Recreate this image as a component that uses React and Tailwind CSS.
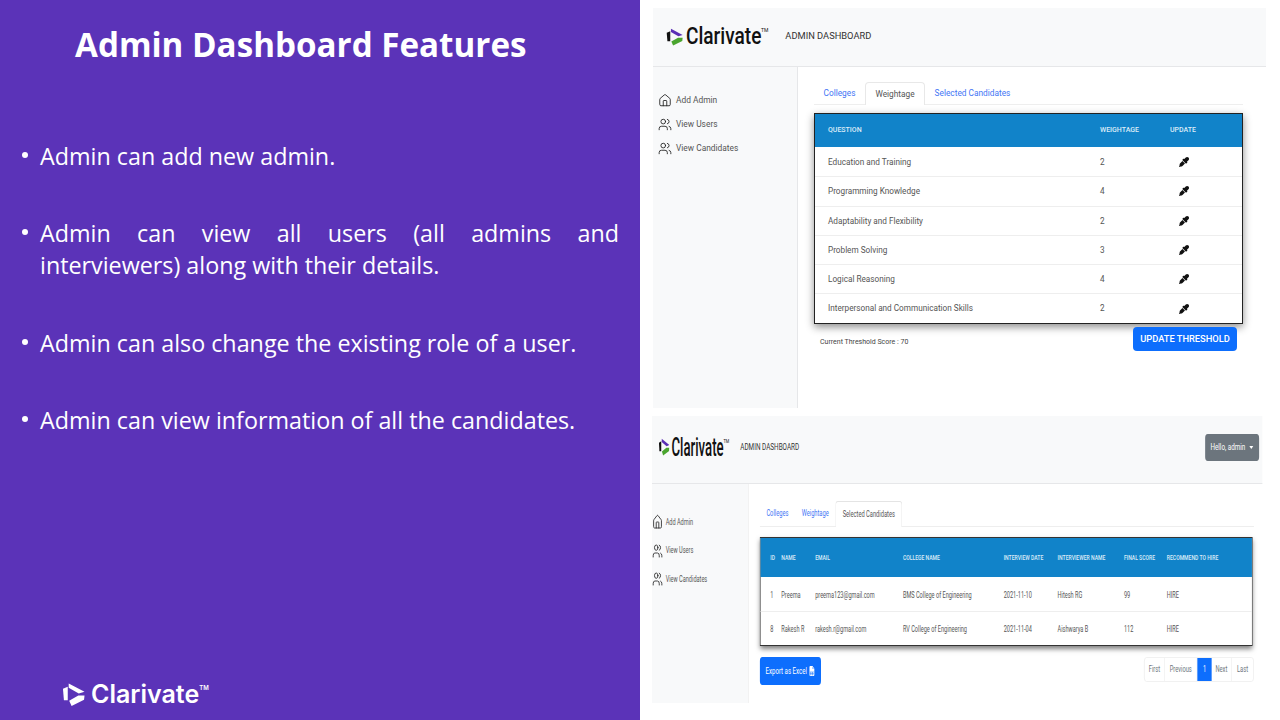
import React from "react";
import { House, Users } from "lucide-react";
import { BsFileEarmarkSpreadsheetFill } from "react-icons/bs";
import { FaEyeDropper } from "react-icons/fa";

const BULLETS = [
  "Admin can add new admin.",
  "Admin can view all users (all admins and interviewers) along with their details.",
  "Admin can also change the existing role of a user.",
  "Admin can view information of all the candidates.",
];

const WEIGHTS = [
  ["Education and Training", 2],
  ["Programming Knowledge", 4],
  ["Adaptability and Flexibility", 2],
  ["Problem Solving", 3],
  ["Logical Reasoning", 4],
  ["Interpersonal and Communication Skills", 2],
];

const CANDIDATES = [
  ["1", "Preema", "preema123@gmail.com", "BMS College of Engineering", "2021-11-10", "Hitesh RG", "99", "HIRE"],
  ["8", "Rakesh R", "rakesh.r@gmail.com", "RV College of Engineering", "2021-11-04", "Aishwarya B", "112", "HIRE"],
];

const HEADERS = ["ID", "NAME", "EMAIL", "COLLEGE NAME", "INTERVIEW DATE", "INTERVIEWER NAME", "FINAL SCORE", "RECOMMEND TO HIRE"];

function LogoMark({ className, top = "#5b2fb5", left = "#111111", bottom = "#4aa52e" }) {
  return (
    <svg viewBox="0 0 24 24" className={className}>
      <polygon points="7,0.5 23.5,9 17.5,11 7,5" fill={top} />
      <polygon points="1,6 6,4 6,18 2,18" fill={left} />
      <polygon points="23.5,13 23,17.5 10,24 7.5,18.5 17,13" fill={bottom} />
    </svg>
  );
}

function SideItems({ className, iconClass }) {
  return (
    <ul className={className}>
      <li className="flex items-center gap-[4px]">
        <House className={iconClass} strokeWidth={1.5} />
        Add Admin
      </li>
      <li className="flex items-center gap-[4px]">
        <Users className={iconClass} strokeWidth={1.5} />
        View Users
      </li>
      <li className="flex items-center gap-[4px]">
        <Users className={iconClass} strokeWidth={1.5} />
        View Candidates
      </li>
    </ul>
  );
}

function WeightagePanel() {
  return (
    <section className="flex h-[400px] w-[613px] flex-col font-['Roboto',sans-serif]">
      <header className="flex h-[59px] shrink-0 items-center border-b border-[#e6e7e9] bg-[#f8f9fa] pl-[13px]">
        <LogoMark className="h-[22px] w-[17px]" />
        <span className="ml-[3px] w-[75px] origin-left scale-x-[0.83] text-[23px] font-medium whitespace-nowrap text-[#111]">Clarivate</span>
        <span className="mb-[12px] text-[5px] text-[#111]">TM</span>
        <span className="mb-[3px] ml-[17px] text-[9.3px] text-[#333]">ADMIN DASHBOARD</span>
      </header>
      <div className="flex min-h-0 flex-1">
        <aside className="w-[145px] shrink-0 border-r border-[#e6e7e9] bg-[#f8f9fa] pt-[26px] pl-[5px]">
          <SideItems className="flex flex-col gap-[9px] text-[8.4px] text-[#555]" iconClass="h-[15px] w-[14px] text-[#222]" />
        </aside>
        <div className="flex-1 pt-[15px] pr-[23px] pl-[16px]">
          <nav className="flex h-[23px] items-end border-b border-[#eee] text-[8.3px] leading-[12px] text-[#3f75f5]">
            <span className="px-[9.5px] pb-[5px]">Colleges</span>
            <span className="-mb-px rounded-t-sm border border-b-0 border-[#e8e8e8] bg-white px-[9.5px] py-[5px] text-[#555]">Weightage</span>
            <span className="px-[9.5px] pb-[5px]">Selected Candidates</span>
          </nav>
          <div className="mt-[8px] w-[429px] border border-[#222] bg-white shadow-[0_3px_8px_rgba(0,0,0,0.45)]">
            <div className="grid h-[33px] grid-cols-[272px_70px_1fr] items-center bg-[#1183c9] pl-[13px] text-[7px] font-medium text-[#dcecf8]">
              <span>QUESTION</span>
              <span>WEIGHTAGE</span>
              <span>UPDATE</span>
            </div>
            {WEIGHTS.map(([name, weight], i) => (
              <div key={name} className={"grid h-[29.3px] grid-cols-[272px_70px_1fr] items-center pl-[13px] text-[8.2px] text-[#555] " + (i > 0 ? "border-t border-[#eee]" : "")}>
                <span>{name}</span>
                <span>{weight}</span>
                <FaEyeDropper className="ml-[9px] h-[10px] w-[10px] text-[#111]" />
              </div>
            ))}
          </div>
          <div className="mt-[3px] flex items-start justify-between pr-[6px] pl-[6px]">
            <span className="mt-[10px] text-[7px] text-[#444]">Current Threshold Score : 70</span>
            <button className="h-[24px] w-[104px] rounded-sm bg-[#0d6efd] text-[9.3px] font-medium text-white">UPDATE THRESHOLD</button>
          </div>
        </div>
      </div>
    </section>
  );
}

// this shot sits squeezed on the slide, so lay it out wide and scale x
function CandidatesPanel() {
  return (
    <section className="h-[287px] w-[610px]">
      <div className="flex h-[287px] w-[938.5px] origin-top-left scale-x-[0.65] flex-col font-['Roboto',sans-serif]">
        <header className="flex h-[68px] shrink-0 items-center border-b border-[#e6e7e9] bg-[#f8f9fa] pb-[5px] pl-[10px]">
          <LogoMark className="h-[24px] w-[17px]" />
          <span className="ml-[3px] w-[80px] origin-left scale-x-[0.78] text-[26px] font-medium whitespace-nowrap text-[#111]">Clarivate</span>
          <span className="mb-[14px] text-[6px] text-[#111]">TM</span>
          <span className="ml-[17px] text-[9.8px] text-[#333]">ADMIN DASHBOARD</span>
          <button className="mr-[5px] ml-auto flex h-[27px] w-[83px] items-center justify-center gap-[6px] rounded-sm bg-[#6c757d] text-[9.7px] text-white">
            Hello, admin
            <span className="h-0 w-0 border-x-[3px] border-t-[3px] border-x-transparent border-t-white"></span>
          </button>
        </header>
        <div className="flex min-h-0 flex-1">
          <aside className="w-[149px] shrink-0 border-r border-[#eee] bg-[#f8f9fa] pt-[30px]">
            <SideItems className="flex flex-col gap-[12.5px] text-[8.6px] text-[#555]" iconClass="h-[16px] w-[17px] text-[#222]" />
          </aside>
          <div className="flex-1 pt-[17px] pr-[13px] pl-[17px]">
            <nav className="flex h-[26px] items-end border-b border-[#eee] text-[8.8px] leading-[13px] text-[#3f75f5]">
              <span className="px-[10px] pb-[6px]">Colleges</span>
              <span className="px-[10.5px] pb-[6px]">Weightage</span>
              <span className="-mb-px rounded-t-sm border border-b-0 border-[#e4e4e4] bg-white px-[10px] py-[6px] text-[#555]">Selected Candidates</span>
            </nav>
            <div className="mt-[10px] w-[758px] border border-[#333] bg-white shadow-[0_3px_6px_rgba(0,0,0,0.5)]">
              <div className="grid h-[39px] grid-cols-[17px_52px_135px_155px_83px_102px_66px_1fr] items-center bg-[#1183c9] pl-[15px] text-[7.8px] font-medium text-[#dcecf8]">
                {HEADERS.map((h) => (
                  <span key={h} className="whitespace-nowrap">{h}</span>
                ))}
              </div>
              {CANDIDATES.map((row, i) => (
                <div key={row[0]} className={"grid h-[34px] grid-cols-[17px_52px_135px_155px_83px_102px_66px_1fr] items-center pt-[2px] pl-[15px] text-[8.6px] text-[#555] " + (i > 0 ? "border-t border-[#eee]" : "")}>
                  {row.map((cell, j) => (
                    <span key={j} className="whitespace-nowrap">{cell}</span>
                  ))}
                </div>
              ))}
            </div>
            <div className="mt-[11px] flex w-[760px] items-start justify-between">
              <button className="flex h-[28px] w-[94px] items-center justify-center gap-[3px] rounded-sm bg-[#0d6efd] text-[9.4px] whitespace-nowrap text-white">
                Export as Excel
                <BsFileEarmarkSpreadsheetFill className="h-[12px] w-[10px]" />
              </button>
              <div className="flex h-[25px] items-stretch rounded-sm border border-[#eee] text-[8.8px] text-[#6c757d]">
                <span className="flex w-[31px] items-center justify-center border-r border-[#eee]">First</span>
                <span className="flex w-[50px] items-center justify-center border-r border-[#eee]">Previous</span>
                <span className="flex w-[22px] items-center justify-center bg-[#0d6efd] text-white">1</span>
                <span className="flex w-[31px] items-center justify-center border-r border-[#eee]">Next</span>
                <span className="flex w-[33px] items-center justify-center">Last</span>
              </div>
            </div>
          </div>
        </div>
      </div>
    </section>
  );
}

export default function App() {
  return (
    <div className="flex h-[720px] w-[1280px] overflow-hidden bg-white">
      <aside className="flex w-[640px] shrink-0 flex-col bg-[#5b33b8] font-['Open_Sans',sans-serif] text-white">
        <h1 className="mt-[20px] pl-[75px] text-[33.2px] leading-[50px] font-bold">Admin Dashboard Features</h1>
        <ul className="mt-[70px] flex flex-col gap-[45px] pr-[21px] pl-[40px] text-[23.3px] leading-[32px]">
          {BULLETS.map((b, i) => (
            <li key={b} className={"relative text-justify " + (i === 2 ? "mt-[1px]" : "")}>
              <span className="absolute top-[12px] left-[-18px] h-[6px] w-[6px] rounded-full bg-white"></span>
              {b}
            </li>
          ))}
        </ul>
        <div className="mt-auto mb-[11px] ml-[62px] flex items-center">
          <LogoMark className="h-[25px] w-[23px]" top="#fff" left="#fff" bottom="#fff" />
          <span className="ml-[6px] font-['Inter',sans-serif] text-[25px] leading-[30px] font-semibold">Clarivate</span>
          <span className="mb-[14px] font-['Inter',sans-serif] text-[6px] font-semibold">TM</span>
        </div>
      </aside>
      <main className="flex flex-col pt-[8px] pl-[12px]">
        <div className="ml-[1px]">
          <WeightagePanel />
        </div>
        <div className="mt-[8px]">
          <CandidatesPanel />
        </div>
      </main>
    </div>
  );
}
